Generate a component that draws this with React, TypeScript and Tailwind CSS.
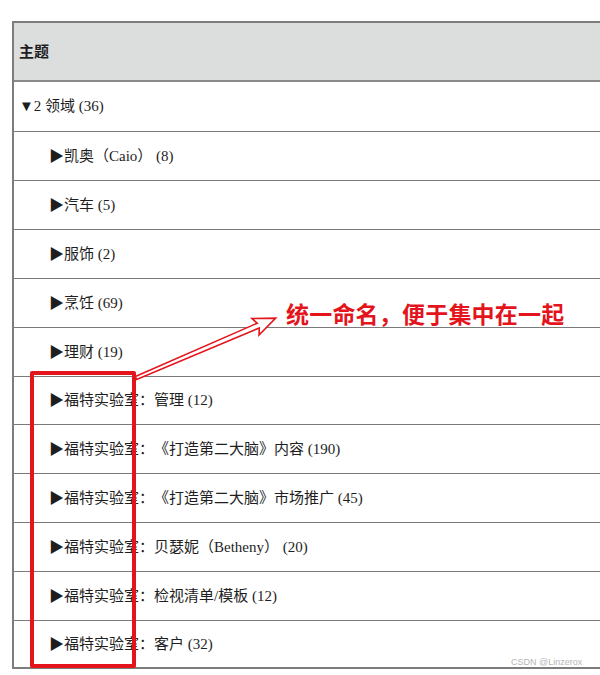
import React from 'react';

const rows: { text: string; indent: boolean; h: string }[] = [
  { text: '▼2 领域 (36)', indent: false, h: 'h-[49px]' },
  { text: '▶凯奥（Caio） (8)', indent: true, h: 'h-[49px]' },
  { text: '▶汽车 (5)', indent: true, h: 'h-[49px]' },
  { text: '▶服饰 (2)', indent: true, h: 'h-[49px]' },
  { text: '▶烹饪 (69)', indent: true, h: 'h-[49px]' },
  { text: '▶理财 (19)', indent: true, h: 'h-[49px]' },
  { text: '▶福特实验室：管理 (12)', indent: true, h: 'h-[48px]' },
  { text: '▶福特实验室：《打造第二大脑》内容 (190)', indent: true, h: 'h-[49px]' },
  { text: '▶福特实验室：《打造第二大脑》市场推广 (45)', indent: true, h: 'h-[49px]' },
  { text: '▶福特实验室：贝瑟妮（Betheny） (20)', indent: true, h: 'h-[49px]' },
  { text: '▶福特实验室：检视清单/模板 (12)', indent: true, h: 'h-[49px]' },
  { text: '▶福特实验室：客户 (32)', indent: true, h: 'h-[47px]' },
];

export default function App() {
  return (
    <div className="relative w-[600px] h-[675px] overflow-hidden bg-white font-['Liberation_Serif','Noto_Sans_CJK_SC',serif] text-[15px] text-[#1e1e1e] [text-spacing-trim:space-all]">
      <div className="pl-[12px] pt-[21px]">
        <div className="w-[640px] border-l-2 border-t-2 border-b-2 border-[#7d7d7d]">
          <div className="h-[59px] flex items-center pl-[5px] bg-[#dcdddd] border-b-2 border-[#8a8a8a] font-bold font-['Noto_Sans_CJK_SC',sans-serif]">
            主题
          </div>
          {rows.map((r, i) => (
            <div
              key={i}
              className={
                r.h +
                ' flex items-center ' +
                (i > 0 ? 'border-t border-[#7a7a7a] ' : '') +
                (r.indent ? 'pl-[35px]' : 'pl-[5px]')
              }
            >
              {r.text}
            </div>
          ))}
        </div>
      </div>

      {/* annotation: red box */}
      <div className="absolute left-[30px] top-[371px] w-[106px] h-[297px] border-4 border-[#e3141c] rounded-[2px]" />

      {/* annotation: arrow */}
      <svg className="absolute left-0 top-0" width="600" height="675">
        <g transform="translate(136,378) rotate(-23.2)">
          <polygon
            points="0,-1.6 133,-2.6 130,-9 152,0 130,9 133,2.6 0,1.6"
            fill="white"
            stroke="#e3141c"
            strokeWidth="1.6"
            strokeLinejoin="miter"
          />
        </g>
      </svg>

      <div className="absolute left-[286px] top-[297px] text-[23px] font-bold text-[#e3141c] font-['Noto_Sans_CJK_SC',sans-serif] leading-[32px] tracking-[0.2px]">
        统一命名，便于集中在一起
      </div>

      <div className="absolute left-[511px] top-[656px] text-[9px] text-[#b5b5b5] font-['Liberation_Sans',sans-serif]">
        CSDN @Linzerox
      </div>
    </div>
  );
}
